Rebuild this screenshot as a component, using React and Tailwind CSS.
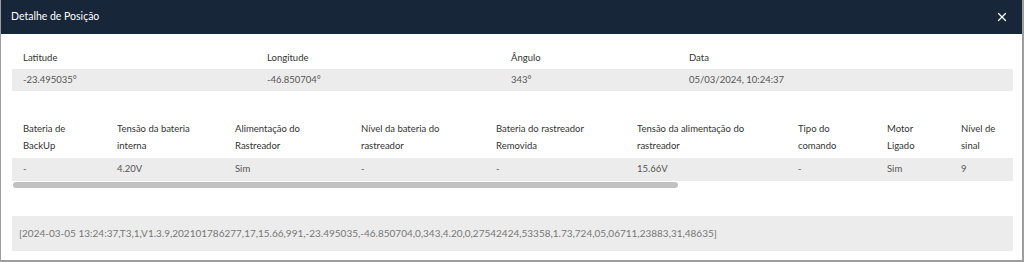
import { X } from "lucide-react";

const posicao = [
    { label: "Latitude", value: "-23.495035°", w: "w-[244px]" },
    { label: "Longitude", value: "-46.850704°", w: "w-[244px]" },
    { label: "Ângulo", value: "343°", w: "w-[178px]" },
    { label: "Data", value: "05/03/2024, 10:24:37", w: "" },
];

const telemetria = [
    { label: ["Bateria de", "BackUp"], value: "-", w: "w-[94px]" },
    { label: ["Tensão da bateria", "interna"], value: "4.20V", w: "w-[118px]" },
    { label: ["Alimentação do", "Rastreador"], value: "Sim", w: "w-[126px]" },
    { label: ["Nível da bateria do", "rastreador"], value: "-", w: "w-[135px]" },
    { label: ["Bateria do rastreador", "Removida"], value: "-", w: "w-[141px]" },
    { label: ["Tensão da alimentação do", "rastreador"], value: "15.66V", w: "w-[161px]" },
    { label: ["Tipo do", "comando"], value: "-", w: "w-[89px]" },
    { label: ["Motor", "Ligado"], value: "Sim", w: "w-[74px]" },
    { label: ["Nível de", "sinal"], value: "9", w: "" },
];

const raw = "[2024-03-05 13:24:37,T3,1,V1.3.9,202101786277,17,15.66,991,-23.495035,-46.850704,0,343,4.20,0,27542424,53358,1.73,724,05,06711,23883,31,48635]";

export default function App() {
    return (
        <div className="h-[262px] w-full bg-[#9d9d9d] pl-[1px]" style={{ fontFamily: "Lato, 'Open Sans', sans-serif" }}>
            <div className="flex h-[260px] w-[1021px] flex-col bg-white">
                <div className="flex h-[34px] items-center justify-between bg-[#172638] pl-[10px] pr-[13px]">
                    <h2 className="text-[10.5px] text-white">Detalhe de Posição</h2>
                    <button className="text-white"><X className="size-[14px]" strokeWidth={2.2} /></button>
                </div>

                <div className="px-[11px] pt-[13px]">
                    <table className="w-[1001px] table-fixed text-left text-[9.5px]">
                        <thead>
                            <tr className="h-[22px] text-[#333]">
                                {posicao.map((p) => (
                                    <th key={p.label} className={`${p.w} pl-[11px] font-normal`}>{p.label}</th>
                                ))}
                            </tr>
                        </thead>
                        <tbody>
                            <tr className="h-[22px] bg-[#ececec] text-[#555]">
                                {posicao.map((p) => (
                                    <td key={p.label} className="pl-[11px]">{p.value}</td>
                                ))}
                            </tr>
                        </tbody>
                    </table>

                    <div className="mt-[28px] w-[1001px]">
                        <table className="w-full table-fixed text-left text-[9.5px]">
                            <thead>
                                <tr className="h-[39px] text-[#333]">
                                    {telemetria.map((t) => (
                                        <th key={t.label[0]} className={`${t.w} pl-[11px] pt-[2px] align-top font-normal leading-[16.5px]`}>
                                            {t.label[0]}<br />{t.label[1]}
                                        </th>
                                    ))}
                                </tr>
                            </thead>
                            <tbody>
                                <tr className="h-[23px] bg-[#ececec] text-[#555]">
                                    {telemetria.map((t) => (
                                        <td key={t.label[0]} className="pl-[11px]">{t.value}</td>
                                    ))}
                                </tr>
                            </tbody>
                        </table>
                        {/* barra de rolagem horizontal */}
                        <div className="ml-[1px] mt-[1px] h-[6px] w-[665px] rounded-full bg-[#c1c1c1]" />
                    </div>

                    <div className="mt-[28px] flex h-[35px] w-[1001px] items-center bg-[#ececec] px-[7px] text-[10px] text-[#777]">
                        {raw}
                    </div>
                </div>
            </div>
        </div>
    );
}
